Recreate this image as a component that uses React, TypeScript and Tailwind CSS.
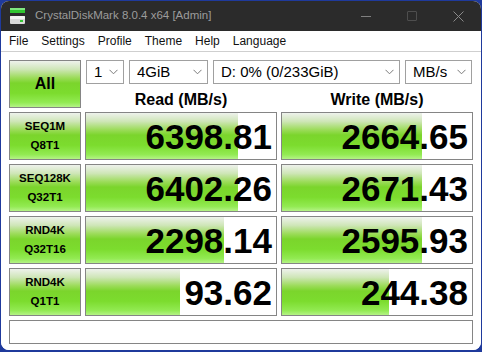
import React from "react";

const green =
  "linear-gradient(to bottom, #eef2ec 0%, #cfe6b8 18%, #9ddc5c 36%, #7bd52c 48%, #7cdc2e 70%, #92ea52 90%, #b4f386 100%)";

type Row = { l1: string; l2: string; r: string; rw: number; w: string; ww: number };

const rows: Row[] = [
  { l1: "SEQ1M", l2: "Q8T1", r: "6398.81", rw: 152, w: "2664.65", ww: 140 },
  { l1: "SEQ128K", l2: "Q32T1", r: "6402.26", rw: 152, w: "2671.43", ww: 140 },
  { l1: "RND4K", l2: "Q32T16", r: "2298.14", rw: 138, w: "2595.93", ww: 140 },
  { l1: "RND4K", l2: "Q1T1", r: "93.62", rw: 94, w: "244.38", ww: 107 },
];

function Chevron() {
  return (
    <svg width="9" height="6" viewBox="0 0 9 6" className="shrink-0">
      <path d="M0.5 0.8 L4.5 4.8 L8.5 0.8" fill="none" stroke="#7a7a7a" strokeWidth="1" />
    </svg>
  );
}

function Combo({ w, text }: { w: string; text: string }) {
  return (
    <div
      className={`${w} h-[24px] border border-[#a0a0a0] bg-white flex items-center justify-between pl-[7px] pr-[5px] text-[15px] leading-[22px] text-black`}
    >
      <span>{text}</span>
      <Chevron />
    </div>
  );
}

function ValueBox({ value, bar }: { value: string; bar: number }) {
  return (
    <div className="relative h-[48px] border border-[#858585] bg-white flex items-center justify-end pr-[4px] overflow-hidden">
      <div className="absolute left-0 top-0 bottom-0" style={{ width: bar, background: green }} />
      <span className="relative text-[35px] leading-[35px] font-bold text-black">{value}</span>
    </div>
  );
}

export default function App() {
  return (
    <div
      className="w-[482px] h-[352px] pt-[1px] pl-[1px] bg-[#1f3a9c] overflow-hidden"
      style={{ fontFamily: '"Liberation Sans", Arial, sans-serif' }}
    >
      <div className="w-[480px] h-[349px] rounded-[8px] overflow-hidden flex flex-col bg-white">
        {/* Title bar */}
        <div className="h-[30px] bg-[#2b2b2b] flex items-center shrink-0">
          <svg width="18" height="18" viewBox="0 0 18 18" className="ml-[8px]">
            <rect x="1" y="1" width="15" height="5" fill="#2fc42f" />
            <rect x="1" y="1" width="15" height="2" fill="#7fe87f" />
            <rect x="1" y="9" width="15" height="8" rx="1" fill="#d8d8d8" />
            <rect x="1" y="9" width="15" height="3" rx="1" fill="#f2f2f2" />
            <rect x="11" y="13" width="3" height="2" fill="#33c433" />
          </svg>
          <span className="ml-[8px] text-[11.5px] text-[#9c9c9c]">CrystalDiskMark 8.0.4 x64 [Admin]</span>
          <div className="ml-auto flex items-center h-full">
            <div className="w-[46px] h-full flex items-center justify-center">
              <div className="w-[10px] h-[1px] bg-[#808080]" />
            </div>
            <div className="w-[46px] h-full flex items-center justify-center">
              <div className="w-[10px] h-[10px] border border-[#4e4e4e] rounded-[1px]" />
            </div>
            <div className="w-[46px] h-full flex items-center justify-center">
              <svg width="11" height="11" viewBox="0 0 11 11">
                <path d="M0.5 0.5 L10.5 10.5 M10.5 0.5 L0.5 10.5" stroke="#8a8a8a" strokeWidth="1" />
              </svg>
            </div>
          </div>
        </div>
        {/* Menu bar */}
        <div className="h-[20px] bg-white flex items-center pl-[8px] gap-[13px] text-[12px] text-[#111] border-b border-[#cfcfcf] shrink-0 box-content">
          <span>File</span>
          <span>Settings</span>
          <span>Profile</span>
          <span>Theme</span>
          <span>Help</span>
          <span>Language</span>
        </div>
        {/* Body */}
        <div className="flex-1 bg-white pt-[8px] pl-[8px] flex flex-col gap-[4px]">
          <div className="grid grid-cols-[72px_192px_192px] gap-x-[4px]">
            <div
              className="h-[48px] border border-[#858585] flex items-center justify-center text-[16px] leading-[16px] font-bold text-black"
              style={{ background: green }}
            >
              All
            </div>
            <div className="col-span-2 flex flex-col">
              <div className="flex gap-[5px] ml-[1px]">
                <Combo w="w-[38px]" text="1" />
                <Combo w="w-[79px]" text="4GiB" />
                <Combo w="w-[187px]" text="D: 0% (0/233GiB)" />
                <Combo w="w-[67px]" text="MB/s" />
              </div>
              <div className="mt-[8px] h-[16px] grid grid-cols-[192px_192px] gap-x-[4px] text-[16px] leading-[16px] font-bold text-black">
                <div className="text-center">Read (MB/s)</div>
                <div className="text-center">Write (MB/s)</div>
              </div>
            </div>
          </div>
          {rows.map((r, i) => (
            <div key={i} className="grid grid-cols-[72px_192px_192px] gap-x-[4px]">
              <div
                className="h-[48px] border border-[#858585] flex flex-col items-center justify-center text-[11.5px] leading-[19px] font-bold text-black"
                style={{ background: green }}
              >
                <span>{r.l1}</span>
                <span>{r.l2}</span>
              </div>
              <ValueBox value={r.r} bar={r.rw} />
              <ValueBox value={r.w} bar={r.ww} />
            </div>
          ))}
          <div className="w-[464px] h-[24px] border border-[#858585] bg-white" />
        </div>
      </div>
    </div>
  );
}
